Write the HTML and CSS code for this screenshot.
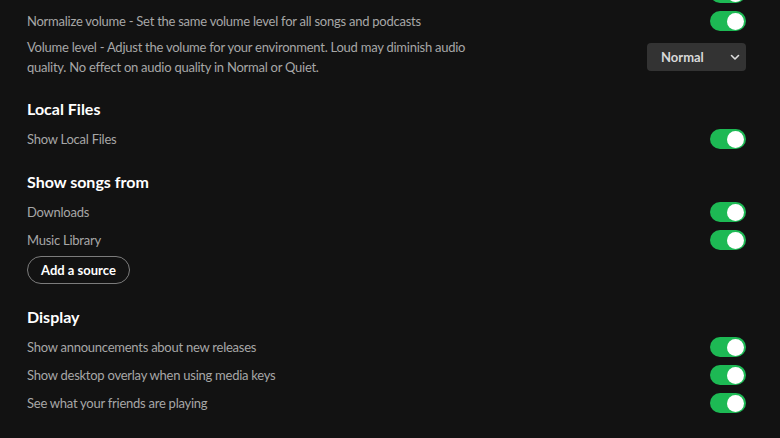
FILE: index.html
```html
<!DOCTYPE html>
<html lang="en">
<head>
<meta charset="utf-8">
<title>Settings</title>
<link rel="stylesheet" href="styles.css">
</head>
<body>
<main class="settings">
  <div class="row row-cut">
    <span class="label"></span>
    <span class="toggle"><span class="knob"></span></span>
  </div>
  <div class="row">
    <span class="label">Normalize volume - Set the same volume level for all songs and podcasts</span>
    <span class="toggle"><span class="knob"></span></span>
  </div>
  <div class="row row-tall">
    <span class="label label-wrap">Volume level - Adjust the volume for your environment. Loud may diminish audio quality. No effect on audio quality in Normal or Quiet.</span>
    <span class="select">
      <span class="select-text">Normal</span>
      <svg class="chevron" width="10" height="10" viewBox="0 0 10 10"><path d="M1.5 3.5 L5 7 L8.5 3.5" fill="none" stroke="#ddd" stroke-width="1.6" stroke-linecap="round" stroke-linejoin="round"/></svg>
    </span>
  </div>

  <section class="section">
    <h2 class="heading">Local Files</h2>
    <div class="row">
      <span class="label">Show Local Files</span>
      <span class="toggle"><span class="knob"></span></span>
    </div>
  </section>

  <section class="section">
    <h2 class="heading">Show songs from</h2>
    <div class="row">
      <span class="label">Downloads</span>
      <span class="toggle"><span class="knob"></span></span>
    </div>
    <div class="row">
      <span class="label">Music Library</span>
      <span class="toggle"><span class="knob"></span></span>
    </div>
    <div class="button-row">
      <button class="pill">Add a source</button>
    </div>
  </section>

  <section class="section">
    <h2 class="heading">Display</h2>
    <div class="row">
      <span class="label">Show announcements about new releases</span>
      <span class="toggle"><span class="knob"></span></span>
    </div>
    <div class="row">
      <span class="label">Show desktop overlay when using media keys</span>
      <span class="toggle"><span class="knob"></span></span>
    </div>
    <div class="row">
      <span class="label">See what your friends are playing</span>
      <span class="toggle"><span class="knob"></span></span>
    </div>
  </section>
</main>
</body>
</html>
```

FILE: styles.css
```css
html, body {
  margin: 0;
  padding: 0;
  background: #121212;
  height: 100%;
  overflow: hidden;
}
body {
  font-family: Lato, "Liberation Sans", Arial, sans-serif;
  color: #a7a7a7;
}
.settings {
  padding: 0 34px 0 27px;
  margin-top: -21px;
}
.row {
  display: flex;
  align-items: center;
  justify-content: space-between;
  min-height: 28px;
}
.row-tall {
  padding: 2px 0 3px;
}
.label {
  font-size: 13px;
  line-height: 20px;
  letter-spacing: -0.25px;
  color: #a7a7a7;
}
.label-wrap {
  max-width: 450px;
}
.toggle {
  width: 36px;
  height: 20px;
  border-radius: 10px;
  background: #1db954;
  display: flex;
  align-items: center;
  justify-content: flex-end;
  padding: 0 2px;
  box-sizing: border-box;
  flex-shrink: 0;
}
.knob {
  width: 17px;
  height: 17px;
  border-radius: 50%;
  background: #fff;
}
.select {
  width: 99px;
  height: 28px;
  background: #333333;
  border-radius: 4px;
  display: flex;
  align-items: center;
  justify-content: space-between;
  box-sizing: border-box;
  padding: 0 6px 0 14px;
  flex-shrink: 0;
}
.select-text {
  font-size: 13px;
  font-weight: bold;
  color: #d9d9d9;
}
.section {
  margin-top: 17px;
}
.heading {
  margin: 0 0 4px;
  font-size: 16px;
  line-height: 24px;
  font-weight: bold;
  color: #ffffff;
}
.button-row {
  padding: 2px 0 4px;
}
.pill {
  font-family: inherit;
  font-size: 13px;
  font-weight: bold;
  color: #fff;
  background: transparent;
  border: 1px solid #7c7c7c;
  border-radius: 14px;
  height: 28px;
  padding: 0 13px;
}
```
